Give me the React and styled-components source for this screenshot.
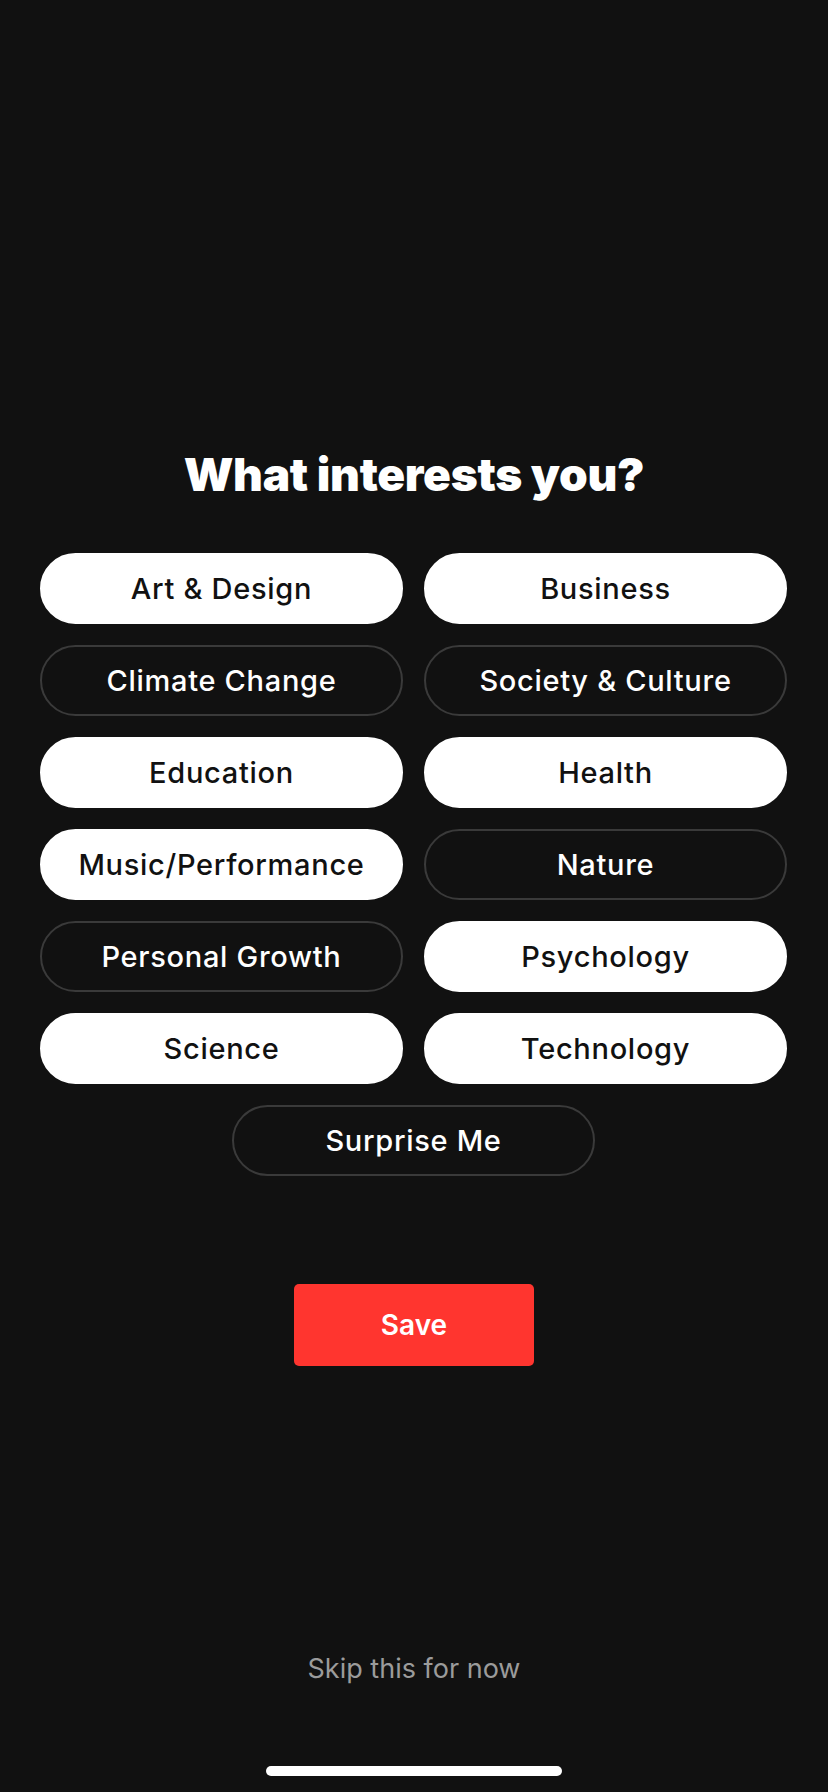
import React, { useState } from "react";
import styled, { createGlobalStyle } from "styled-components";

const Global = createGlobalStyle`
  html, body {
    margin: 0;
    padding: 0;
    background: #111111;
  }
  * { box-sizing: border-box; }
`;

const Screen = styled.div`
  width: 828px;
  height: 1792px;
  background: #111111;
  display: flex;
  flex-direction: column;
  align-items: center;
  font-family: Inter, "Noto Sans", sans-serif;
`;

const Title = styled.h1`
  margin: 446px 0 0;
  font-size: 46px;
  line-height: 56px;
  font-weight: 900;
  letter-spacing: -0.3px;
  color: #ffffff;
`;

const Grid = styled.div`
  margin-top: 51px;
  width: 100%;
  padding: 0 41px 0 40px;
  display: grid;
  grid-template-columns: 1fr 1fr;
  gap: 21px;
`;

const Pill = styled.button`
  height: 71px;
  border-radius: 36px;
  border: 2px solid ${(p) => (p.$on ? "#ffffff" : "#3a3a3a")};
  background: ${(p) => (p.$on ? "#ffffff" : "#111111")};
  color: ${(p) => (p.$on ? "#111111" : "#ffffff")};
  font-family: Inter, "Noto Sans", sans-serif;
  font-size: 29px;
  font-weight: 500;
  letter-spacing: 0.7px;
  cursor: pointer;
  grid-column: ${(p) => (p.$wide ? "1 / span 2" : "auto")};
  justify-self: ${(p) => (p.$wide ? "center" : "stretch")};
  width: ${(p) => (p.$wide ? "363px" : "auto")};
`;

const SaveButton = styled.button`
  margin-top: 108px;
  width: 240px;
  height: 82px;
  border: none;
  border-radius: 5px;
  background: #ff352f;
  color: #ffffff;
  font-family: Inter, "Noto Sans", sans-serif;
  font-size: 28px;
  font-weight: 600;
`;

const Skip = styled.button`
  margin-top: auto;
  background: none;
  border: none;
  color: #9b9b9b;
  font-family: Inter, "Noto Sans", sans-serif;
  font-size: 27px;
  font-weight: 400;
  line-height: 34px;
`;

const HomeBar = styled.div`
  margin: 79px 0 16px;
  width: 296px;
  height: 10px;
  border-radius: 5px;
  background: #ffffff;
`;

const topics = [
  ["Art & Design", true],
  ["Business", true],
  ["Climate Change", false],
  ["Society & Culture", false],
  ["Education", true],
  ["Health", true],
  ["Music/Performance", true],
  ["Nature", false],
  ["Personal Growth", false],
  ["Psychology", true],
  ["Science", true],
  ["Technology", true],
];

export default function App() {
  const [picked, setPicked] = useState(
    Object.fromEntries(topics.map(([t, on]) => [t, on]))
  );
  const toggle = (t) => setPicked((s) => ({ ...s, [t]: !s[t] }));

  return (
    <Screen>
      <Global />
      <Title>What interests you?</Title>
      <Grid>
        {topics.map(([t]) => (
          <Pill key={t} $on={picked[t]} onClick={() => toggle(t)}>
            {t}
          </Pill>
        ))}
        <Pill $wide $on={false}>Surprise Me</Pill>
      </Grid>
      <SaveButton>Save</SaveButton>
      <Skip>Skip this for now</Skip>
      <HomeBar />
    </Screen>
  );
}
